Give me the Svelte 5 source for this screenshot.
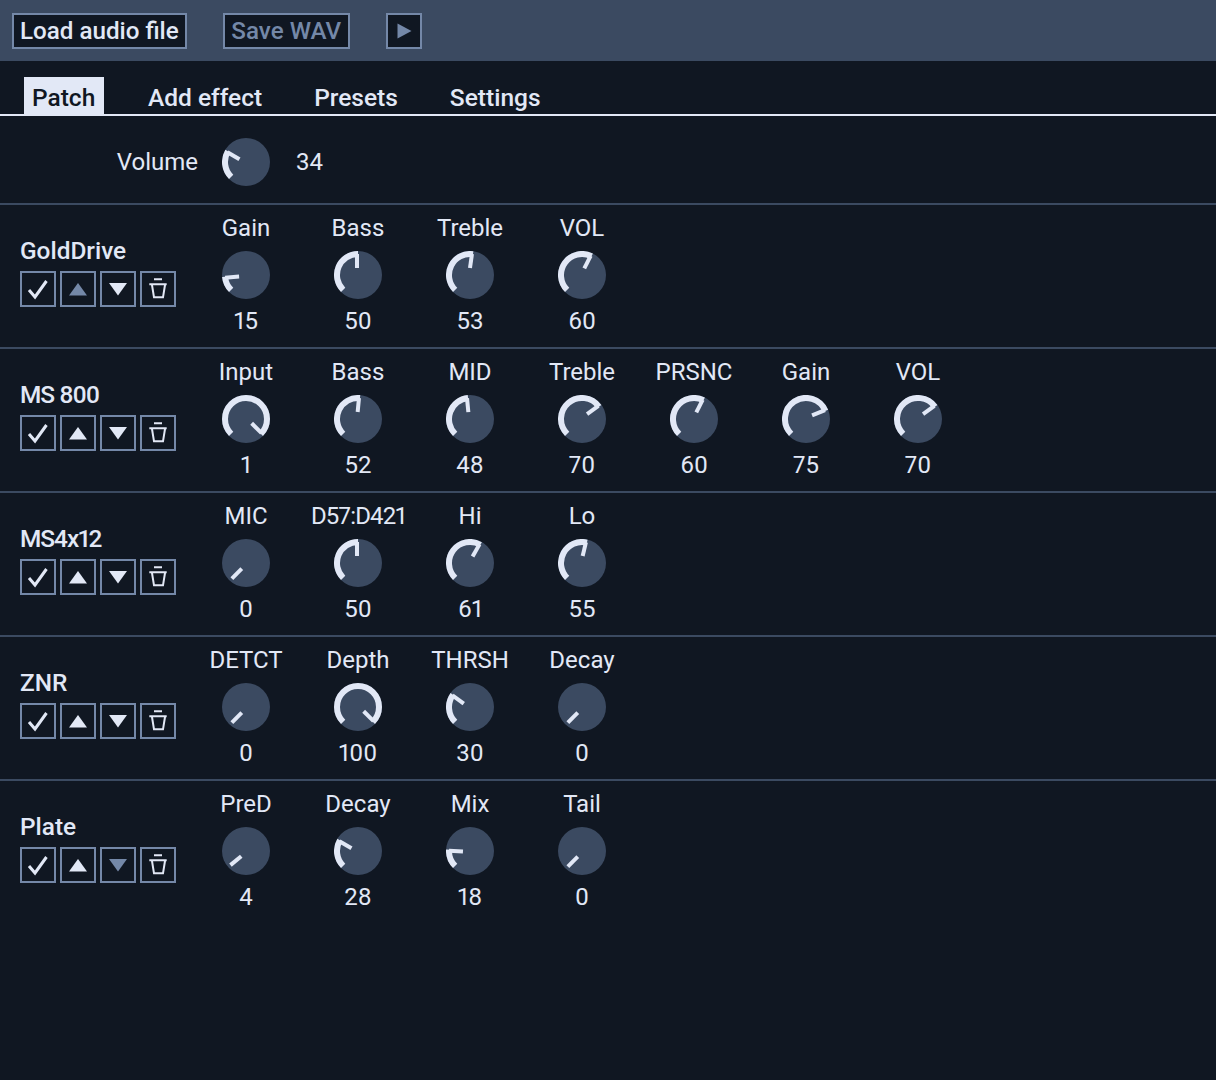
<script>
  const top = { label: 'Volume', value: 34, pos: 28 };
  const fx = [
    { name: 'GoldDrive', upOff: true, k: [['Gain',15],['Bass',50],['Treble',53],['VOL',60]] },
    { name: 'MS 800', tight: true, k: [['Input',1,100],['Bass',52],['MID',48],['Treble',70],['PRSNC',60],['Gain',75],['VOL',70]] },
    { name: 'MS4x12', tight: true, k: [['MIC',0],['D57:D421',50],['Hi',61],['Lo',55]] },
    { name: 'ZNR', k: [['DETCT',0],['Depth',100],['THRSH',30],['Decay',0]] },
    { name: 'Plate', downOff: true, k: [['PreD',4,2],['Decay',28],['Mix',18],['Tail',0]] }
  ];
  const R = 24, r = 21;
  function pt(a, rad, off = 0) {
    const t = (a * Math.PI) / 180;
    return [R + rad * Math.sin(t) + off * Math.cos(t), R - rad * Math.cos(t) + off * Math.sin(t)];
  }
  function arc(p) {
    const a = -135 + p * 2.7;
    const [x0, y0] = pt(-135, r);
    const [x1, y1] = pt(a, r);
    return `M${x0} ${y0}A${r} ${r} 0 ${a + 135 > 180 ? 1 : 0} 1 ${x1} ${y1}`;
  }
  function tick(p) {
    const a = -135 + p * 2.7;
    const [x0, y0] = pt(a, 7, -1);
    const [x1, y1] = pt(a, 21, -1);
    return `M${x0} ${y0}L${x1} ${y1}`;
  }
</script>

{#snippet knob(p)}
  <svg class="knob" width="48" height="48" viewBox="0 0 48 48">
    <circle cx="24" cy="24" r="24" fill="#3b4a61" />
    {#if p > 2}<path d={arc(p)} fill="none" stroke="#e2e8f6" stroke-width="6" />{/if}
    <path d={tick(p)} fill="none" stroke="#e2e8f6" stroke-width="4" />
  </svg>
{/snippet}

<div class="app">
  <header class="bar">
    <button class="tb">Load audio file</button>
    <button class="tb save">Save WAV</button>
    <button class="play" aria-label="Play">
      <svg width="16" height="18" viewBox="0 0 16 18"><path d="M1.500 1.500L15.500 9L1.500 16.500Z" fill="#7488a8" /></svg>
    </button>
  </header>

  <nav class="tabs">
    <span class="tab active">Patch</span>
    <span class="tab">Add effect</span>
    <span class="tab">Presets</span>
    <span class="tab">Settings</span>
  </nav>

  <section class="volume">
    <span class="vlabel">{top.label}</span>
    {@render knob(top.pos)}
    <span class="vvalue">{top.value}</span>
  </section>

  {#each fx as f}
    <section class="row">
      <div class="side">
        <div class="name" class:tight={f.tight}>{f.name}</div>
        <div class="btns">
          <button class="ic" aria-label="Enable">
            <svg width="24" height="24" viewBox="0 0 24 24"><path d="M3 13L9 20L20.500 4" fill="none" stroke="#e2e8f6" stroke-width="3" /></svg>
          </button>
          <button class="ic" aria-label="Up">
            <svg width="24" height="24" viewBox="0 0 24 24"><path d="M12 6L21 18.500H3Z" fill={f.upOff ? '#7488a8' : '#e2e8f6'} /></svg>
          </button>
          <button class="ic" aria-label="Down">
            <svg width="24" height="24" viewBox="0 0 24 24"><path d="M12 18.500L21 6H3Z" fill={f.downOff ? '#7488a8' : '#e2e8f6'} /></svg>
          </button>
          <button class="ic" aria-label="Delete">
            <svg width="24" height="24" viewBox="0 0 24 24"><path d="M8 2.300h8M3.300 7.300h17.400M6 8L8 20.300H17L19 8" fill="none" stroke="#e2e8f6" stroke-width="2" /></svg>
          </button>
        </div>
      </div>
      <div class="knobs">
        {#each f.k as [label, value, pos]}
          <div class="cell">
            <span class="lab" class:narrow={label.includes(':')}>{label}</span>
            {@render knob(pos ?? value)}
            <span class="val">{value}</span>
          </div>
        {/each}
      </div>
    </section>
  {/each}
</div>

<style>
  :global(body) { margin: 0; background: #101722; }
  .app { height: 1080px; background: #101722; color: #e2e8f6; font-family: Roboto, "Noto Sans", sans-serif; font-size: 24px; font-variant-numeric: proportional-nums; overflow: hidden; }
  button { font: inherit; margin: 0; padding: 0; background: #101722; color: inherit; }
  .bar { height: 61px; box-sizing: border-box; background: #3b4a61; display: flex; align-items: center; padding: 0 12px; gap: 36px; }
  .tb { height: 36px; box-sizing: border-box; border: 2px solid #7488a8; padding: 0 6px; font-weight: 500; font-size: 24.200px; }
  .save { color: #7488a8; min-width: 127px; }
  .play { width: 36px; height: 36px; box-sizing: border-box; border: 2px solid #7488a8; display: flex; align-items: center; justify-content: center; }
  .tabs { height: 55px; box-sizing: border-box; border-bottom: 2px solid #e2e8f6; display: flex; align-items: flex-end; padding-left: 24px; gap: 36px; }
  .tab { height: 37px; line-height: 41px; padding: 0 8px; font-weight: 500; font-size: 24.500px; }
  .tab.active { background: #e2e8f6; color: #101722; min-width: 64px; }
  .volume { height: 87px; box-sizing: border-box; padding-top: 5px; display: flex; align-items: center; }
  .vlabel { width: 198px; text-align: right; margin-right: 24px; }
  .vvalue { margin-left: 26px; }
  .row { height: 144px; box-sizing: border-box; border-top: 2px solid #3b4a61; display: flex; }
  .side { width: 190px; box-sizing: border-box; padding: 31px 0 0 20px; }
  .name { font-weight: 500; height: 35px; line-height: 30px; font-size: 24.400px; }
  .name.tight { letter-spacing: -1px; }
  .btns { display: flex; gap: 4px; }
  .ic { width: 36px; height: 36px; box-sizing: border-box; border: 2px solid #7488a8; display: flex; align-items: center; justify-content: center; }
  .knobs { display: flex; }
  .cell { width: 112px; display: flex; flex-direction: column; align-items: center; }
  .lab { height: 46px; line-height: 46px; white-space: nowrap; }
  .lab.narrow { letter-spacing: -0.800px; }
  .val { height: 46px; line-height: 44px; }
  .knob { display: block; }
</style>
